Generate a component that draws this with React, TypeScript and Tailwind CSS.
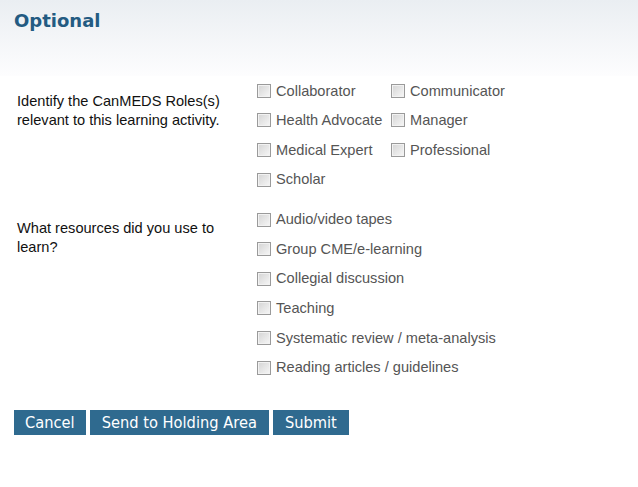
import React from "react";

function Box() {
  return (
    <span className="inline-block w-[14px] h-[14px] border border-[#9a9a9a] bg-gradient-to-br from-[#d4d4d4] to-[#f7f7f7] shadow-[inset_0_0_0_1px_#f2f2f2] shrink-0" />
  );
}

function Item({ label }: { label: string }) {
  return (
    <div className="flex items-center h-[29.6px]">
      <Box />
      <span className="ml-[5px] text-[14.6px] text-[#555] leading-none">{label}</span>
    </div>
  );
}

export default function App() {
  const font = { fontFamily: '"Liberation Sans", Arial, sans-serif' };
  return (
    <div className="w-[638px] h-[487px] bg-white" style={font}>
      <div className="h-[76px] bg-gradient-to-b from-[#eaeef2] to-[#fdfdfe] pl-[14px] pt-[7px]">
        <h1
          className="text-[18px] font-bold text-[#235b82] leading-[28px]"
          style={{ fontFamily: '"DejaVu Sans", Verdana, sans-serif' }}
        >
          Optional
        </h1>
      </div>
      <div className="pl-[17px]">
        <div className="flex">
          <div className="w-[240px] pt-[16px] text-[14.6px] leading-[19px] text-[#111]">
            Identify the CanMEDS Roles(s)
            <br />
            relevant to this learning activity.
          </div>
          <div className="grid grid-cols-[134px_auto]">
            <Item label="Collaborator" />
            <Item label="Communicator" />
            <Item label="Health Advocate" />
            <Item label="Manager" />
            <Item label="Medical Expert" />
            <Item label="Professional" />
            <Item label="Scholar" />
          </div>
        </div>
        <div className="flex mt-[10.4px]">
          <div className="w-[240px] pt-[14px] text-[14.6px] leading-[19px] text-[#111]">
            What resources did you use to
            <br />
            learn?
          </div>
          <div className="flex flex-col">
            <Item label="Audio/video tapes" />
            <Item label="Group CME/e-learning" />
            <Item label="Collegial discussion" />
            <Item label="Teaching" />
            <Item label="Systematic review / meta-analysis" />
            <Item label="Reading articles / guidelines" />
          </div>
        </div>
      </div>
      <div
        className="flex gap-[4px] pl-[14px] mt-[28px]"
        style={{ fontFamily: '"DejaVu Sans Condensed", "DejaVu Sans", sans-serif' }}
      >
        <button className="h-[25px] px-[11px] bg-[#2f6a8f] text-white text-[16.3px] leading-none">Cancel</button>
        <button className="h-[25px] px-[12px] bg-[#2f6a8f] text-white text-[16.3px] leading-none">Send to Holding Area</button>
        <button className="h-[25px] px-[12px] bg-[#2f6a8f] text-white text-[16.3px] leading-none">Submit</button>
      </div>
    </div>
  );
}
